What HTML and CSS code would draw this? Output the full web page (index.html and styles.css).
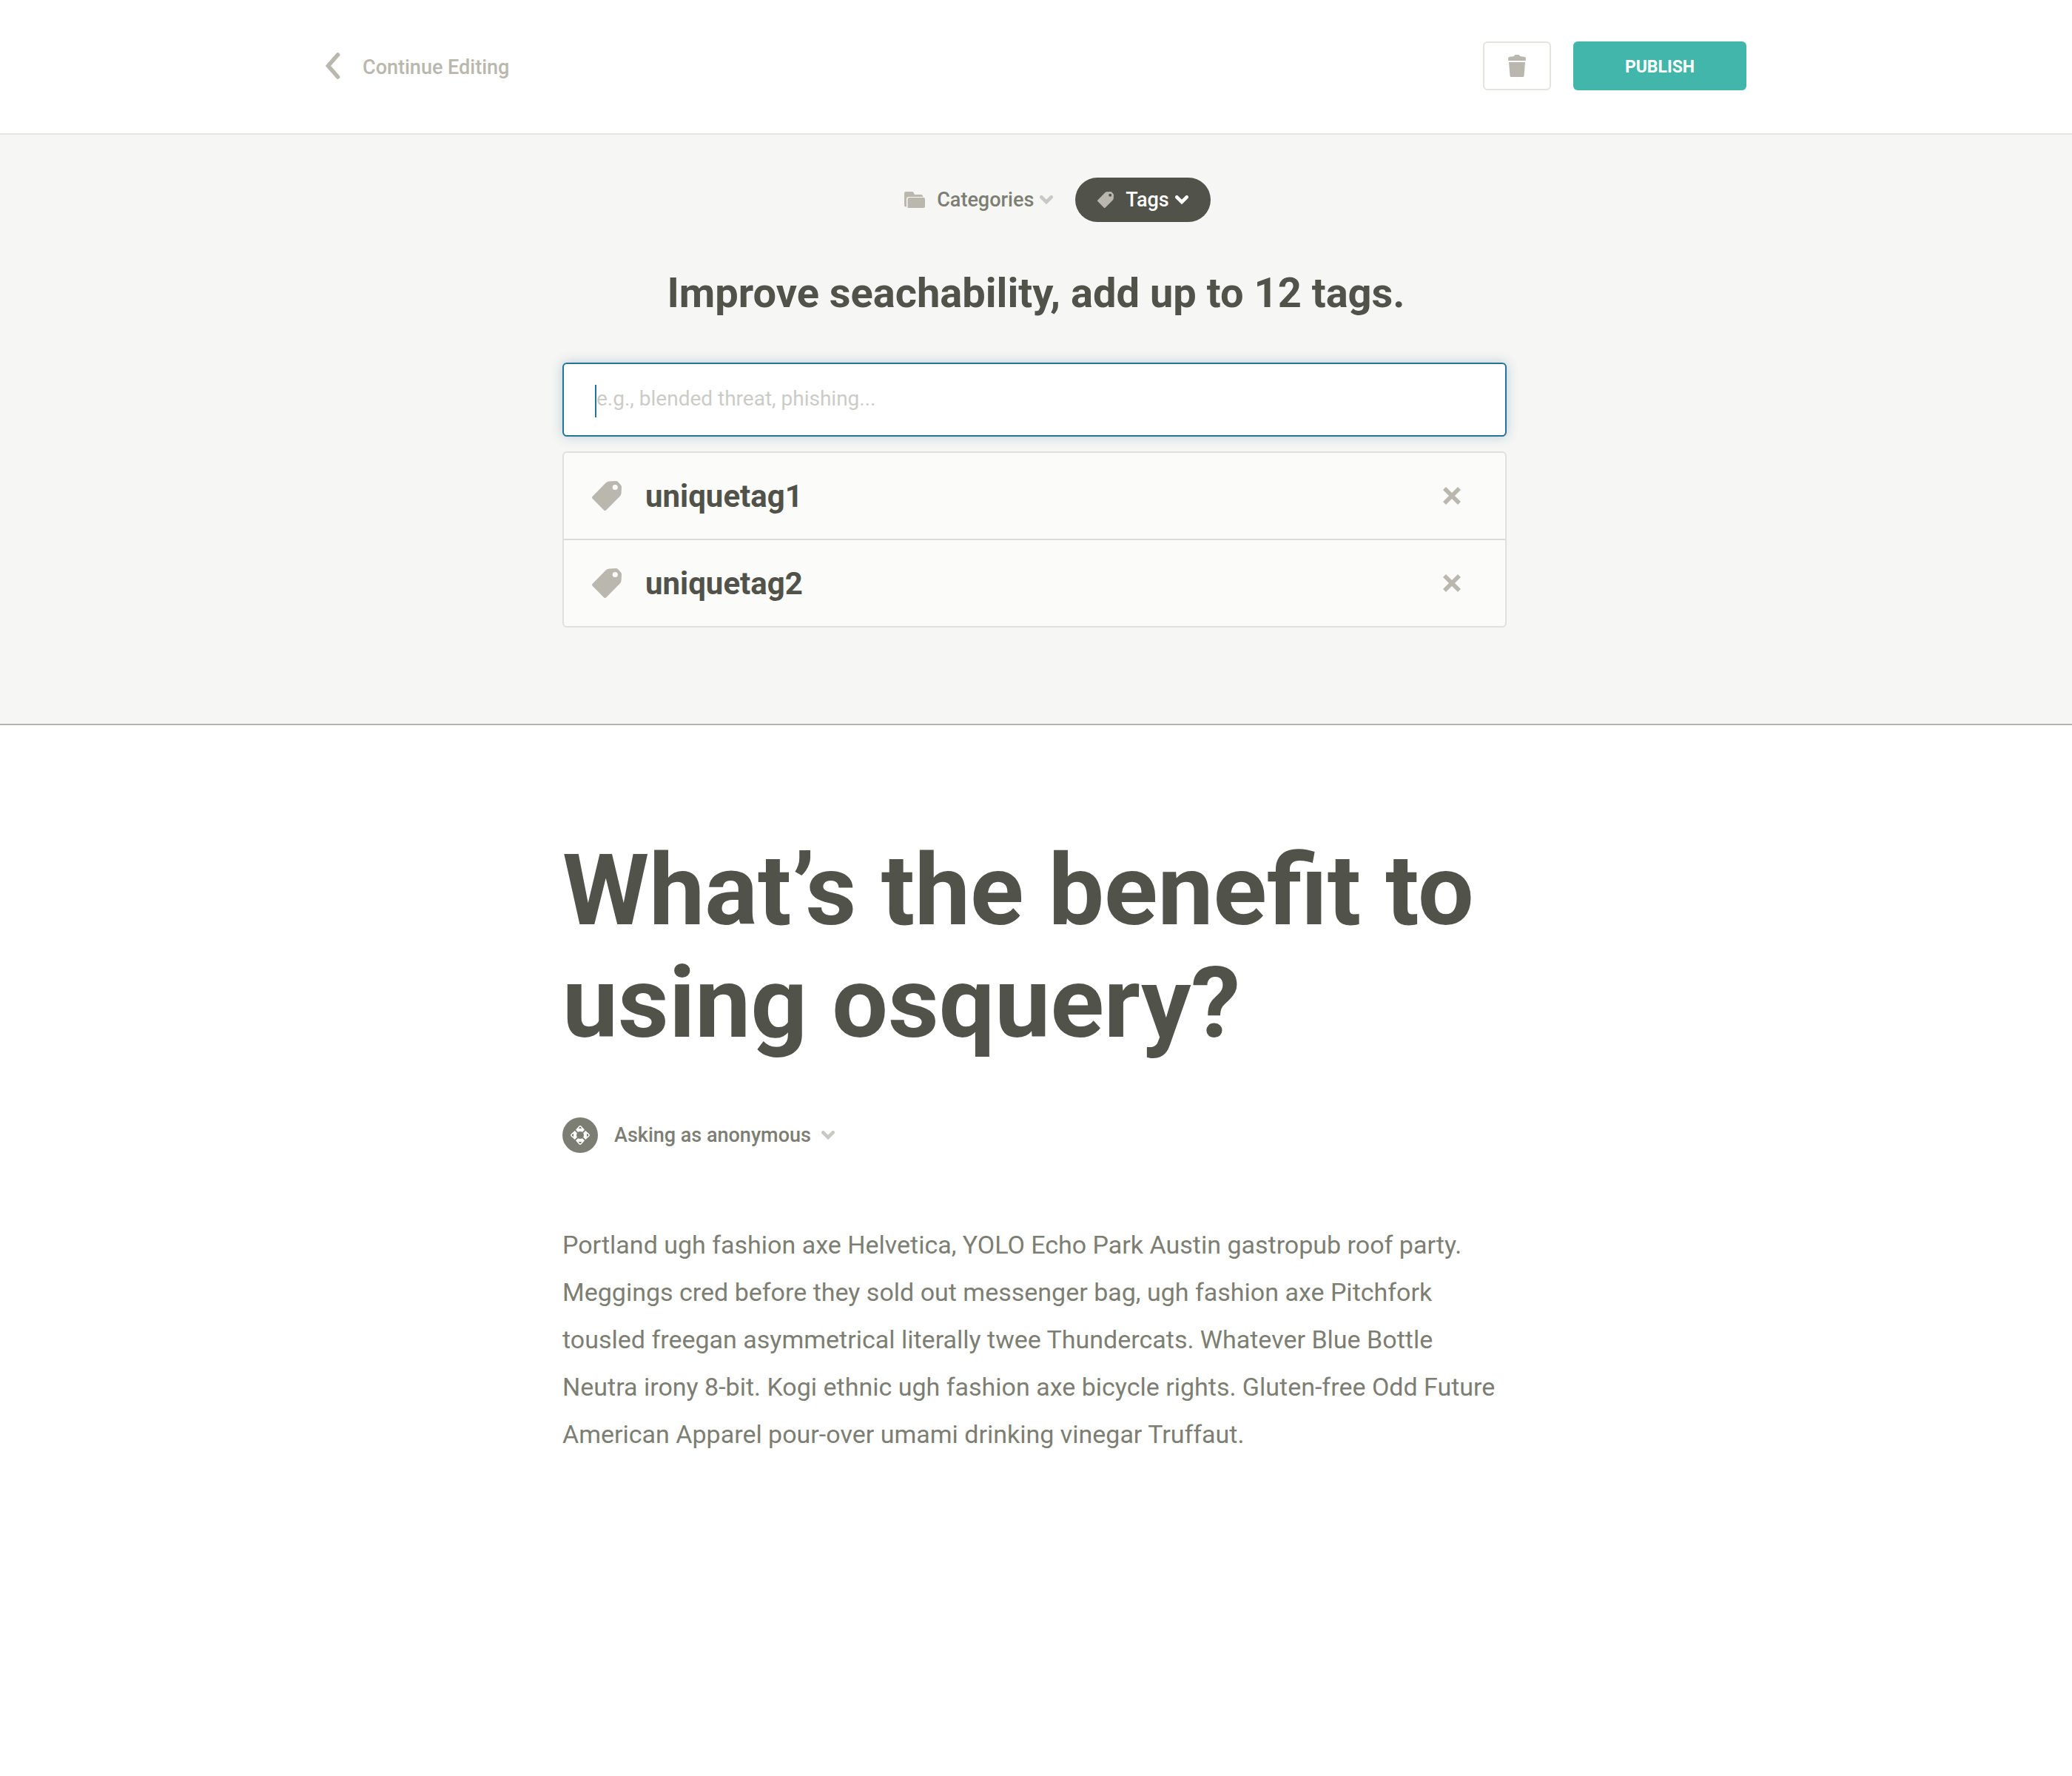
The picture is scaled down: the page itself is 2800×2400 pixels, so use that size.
FILE: index.html
```html
<!DOCTYPE html>
<html lang="en">
<head>
<meta charset="utf-8">
<meta name="viewport" content="width=device-width, initial-scale=1">
<title>Publish question</title>
<link rel="stylesheet" href="styles.css">
</head>
<body>
<svg class="sprite" aria-hidden="true">
  <symbol id="tag" viewBox="0 0 40 40">
    <path fill-rule="evenodd" d="M.6 21 18.4 2.800Q20.300.5 23 .4L32.500 0Q34 0 35 1l4.200 4.700Q40 6.700 40 8l-.4 8.600q-.1 2.200-2 4.200L19 39.400q-1.400 1.200-2.800 0L.6 23.800q-1.200-1.400 0-2.800ZM31.300 4.900a3.600 3.600 0 1 0 0 7.200 3.600 3.600 0 0 0 0-7.200Z"/>
  </symbol>
  <symbol id="chevron" viewBox="0 0 18 12">
    <path d="M2.300 2.300 9 9l6.700-6.700" fill="none" stroke="currentColor" stroke-width="4.600" stroke-linecap="round" stroke-linejoin="miter"/>
  </symbol>
  <symbol id="cross" viewBox="0 0 24 24">
    <path d="m2 2 20 20M22 2 2 22" fill="none" stroke="currentColor" stroke-width="5.600"/>
  </symbol>
</svg>

<header class="topbar">
  <div class="topbar-inner">
    <a class="back" href="#edit">
      <svg class="back-icon" viewBox="0 0 20 36" aria-hidden="true"><path d="M16.500 3 3.500 18l13 15" fill="none" stroke="currentColor" stroke-width="5.600" stroke-linecap="round"/></svg>
      <span class="back-label">Continue Editing</span>
    </a>
    <div class="actions">
      <button class="delete" type="button" aria-label="Delete">
        <svg class="trash-icon" viewBox="0 0 24 30" aria-hidden="true"><path d="M8 2q.5-2 2-2h4q1.500 0 2 2l6 .8q2 .2 2 2.200v2q0 1-1 1H1q-1 0-1-1V5q0-2 2-2.200ZM1 10h22l-1.500 18.500q-.2 1.500-1.500 1.500H4q-1.300 0-1.500-1.500Z"/></svg>
      </button>
      <button class="publish" type="button">PUBLISH</button>
    </div>
  </div>
</header>

<section class="tagging">
  <nav class="tabs">
    <button class="tab" type="button">
      <svg class="folder-icon" viewBox="0 0 28 22" aria-hidden="true"><path d="M0 2q0-2 2-2h9q1.200 0 1.500 1.200l.8 1.600q.4 1.200 1.600 1.200H23q2 0 2 3H6Q3 7 3 10v10.500H2q-2 0-2-2ZM7 8h19q2 0 2 2v10q0 2-2 2H4.500V10q0-2 2.500-2Z"/></svg>
      Categories
      <svg class="chevron" aria-hidden="true"><use href="#chevron"/></svg>
    </button>
    <button class="tab tab-active" type="button">
      <svg class="tab-tag-icon" aria-hidden="true"><use href="#tag"/></svg>
      Tags
      <svg class="chevron" aria-hidden="true"><use href="#chevron"/></svg>
    </button>
  </nav>
  <h2 class="prompt">Improve seachability, add up to 12 tags.</h2>
  <div class="column">
    <div class="tag-field">
      <input class="tag-input" type="text" aria-label="Add a tag" placeholder="e.g., blended threat, phishing...">
    </div>
    <ul class="tag-list">
      <li class="tag-row">
        <svg class="tag-icon" aria-hidden="true"><use href="#tag"/></svg>
        <span class="tag-name">uniquetag1</span>
        <button class="remove" type="button" aria-label="Remove uniquetag1"><svg class="cross-icon" aria-hidden="true"><use href="#cross"/></svg></button>
      </li>
      <li class="tag-row">
        <svg class="tag-icon" aria-hidden="true"><use href="#tag"/></svg>
        <span class="tag-name">uniquetag2</span>
        <button class="remove" type="button" aria-label="Remove uniquetag2"><svg class="cross-icon" aria-hidden="true"><use href="#cross"/></svg></button>
      </li>
    </ul>
  </div>
</section>

<main class="question column">
  <h1 class="title">What’s the benefit to using osquery?</h1>
  <button class="author" type="button">
    <svg class="avatar" viewBox="0 0 48 48" aria-hidden="true">
      <circle cx="24" cy="24" r="24" fill="#7d7e73"/>
      <g fill="#fff">
        <path id="fin" fill-rule="evenodd" d="M21 19.700 18 16.800 22.400 11.700Q24 10.300 25.600 11.700L30 16.800 27 19.700Q24 18.300 21 19.700ZM21.800 15h4.400L24.800 12.900Q24 12.300 23.200 12.900Z"/>
        <use href="#fin" transform="rotate(90 24 24)"/>
        <use href="#fin" transform="rotate(180 24 24)"/>
        <use href="#fin" transform="rotate(270 24 24)"/>
      </g>
    </svg>
    <span class="author-name">Asking as anonymous</span>
    <svg class="chevron" aria-hidden="true"><use href="#chevron"/></svg>
  </button>
  <p class="body-text">Portland ugh fashion axe Helvetica, YOLO Echo Park Austin gastropub roof party. Meggings cred before they sold out messenger bag, ugh fashion axe Pitchfork tousled freegan asymmetrical literally twee Thundercats. Whatever Blue Bottle Neutra irony 8-bit. Kogi ethnic ugh fashion axe bicycle rights. Gluten-free Odd Future American Apparel pour-over umami drinking vinegar Truffaut.</p>
</main>
</body>
</html>
```
FILE: styles.css
```css
*, *::before, *::after { box-sizing: border-box; }

body {
  margin: 0;
  background: #fff;
  color: #51524a;
  font-family: Roboto, "Liberation Sans", sans-serif;
}

button {
  margin: 0;
  padding: 0;
  border: 0;
  background: none;
  color: inherit;
  font: inherit;
  cursor: pointer;
}

svg { display: block; flex: none; fill: currentColor; }

.sprite { position: absolute; width: 0; height: 0; }

.topbar { border-bottom: 2px solid #e5e5e2; }

.topbar-inner {
  display: flex;
  align-items: center;
  justify-content: space-between;
  max-width: 1920px;
  margin: 0 auto;
  padding: 56px 0 58px;
}

.back {
  display: flex;
  align-items: center;
  gap: 30px;
  color: #b9b7ae;
  font-size: 27px;
  font-weight: 500;
  line-height: 40px;
  text-decoration: none;
}

.back-icon { width: 20px; height: 36px; }
.back-label { padding-top: 4px; }

.actions { display: flex; gap: 30px; }

.delete {
  display: flex;
  align-items: center;
  justify-content: center;
  width: 92px;
  height: 66px;
  border: 2px solid #e3e4de;
  border-radius: 6px;
  color: #b9b7ae;
}

.trash-icon { width: 24px; height: 30px; }

.publish {
  width: 234px;
  height: 66px;
  padding-top: 2px;
  border-radius: 6px;
  background: #42b6aa;
  color: #fff;
  font-size: 23px;
  font-weight: 700;
}

.tagging {
  padding: 58px 0 130px;
  border-bottom: 2px solid #b3b3b0;
  background: #f6f6f4;
}

.tabs {
  display: flex;
  justify-content: center;
  padding-left: 28px;
}

.tab {
  display: flex;
  align-items: center;
  height: 60px;
  padding: 0 30px;
  border-radius: 30px;
  color: #7d7e73;
  font-size: 27px;
  font-weight: 500;
}

.tab-active { background: #51524a; color: #fff; }

.folder-icon, .tab-tag-icon { margin-right: 16px; color: #b9b7ae; }
.folder-icon { width: 28px; height: 22px; }
.tab-tag-icon { width: 22px; height: 22px; }

.chevron { width: 18px; height: 12px; margin-left: 8px; color: #c8c9c3; }
.tab-active .chevron { color: #fff; }

.prompt {
  margin: 56px 0 54px;
  font-size: 56px;
  font-weight: 700;
  line-height: 80px;
  text-align: center;
}

.column { max-width: 1280px; margin: 0 auto; padding-right: 4px; }

.tag-field { position: relative; }

/* Text cursor of the focused field */
.tag-field::after {
  content: "";
  position: absolute;
  top: 30px;
  left: 44px;
  width: 2px;
  height: 44px;
  background: #277396;
}

.tag-input {
  display: block;
  width: 100%;
  height: 100px;
  padding: 0 44px 4px;
  border: 2px solid #277396;
  border-radius: 6px;
  outline: 0;
  background: #fff;
  box-shadow: 0 0 16px rgba(39, 115, 150, 0.3);
  caret-color: transparent;
  color: #51524a;
  font: 400 28px/40px Roboto, "Liberation Sans", sans-serif;
}

.tag-input::placeholder { color: #cbccc7; opacity: 1; }

.tag-list {
  margin: 20px 0 0;
  padding: 0;
  border: 2px solid #e0e0de;
  border-radius: 6px;
  background: #fbfbf9;
  list-style: none;
}

.tag-row { display: flex; align-items: center; height: 116px; padding: 0 60px 0 38px; }
.tag-row + .tag-row { height: 118px; border-top: 2px solid #dadbd3; }

.tag-icon { width: 40px; height: 40px; color: #b9b7ae; }
.tag-name { flex: 1; margin-left: 32px; font-size: 42px; font-weight: 700; }
.remove { color: #b9b7ae; }
.cross-icon { width: 24px; height: 24px; }

.title {
  margin: 0;
  padding-top: 148px;
  font-size: 134px;
  font-weight: 700;
  line-height: 152px;
}

.author { display: flex; align-items: center; margin-top: 78px; color: #7d7e73; }
.avatar { width: 48px; height: 48px; }
.author-name { margin: 0 6px 0 22px; font-size: 27px; font-weight: 500; }

.body-text {
  margin: 92px 0 0;
  color: #7d7e73;
  font-size: 34px;
  line-height: 64px;
}
```
